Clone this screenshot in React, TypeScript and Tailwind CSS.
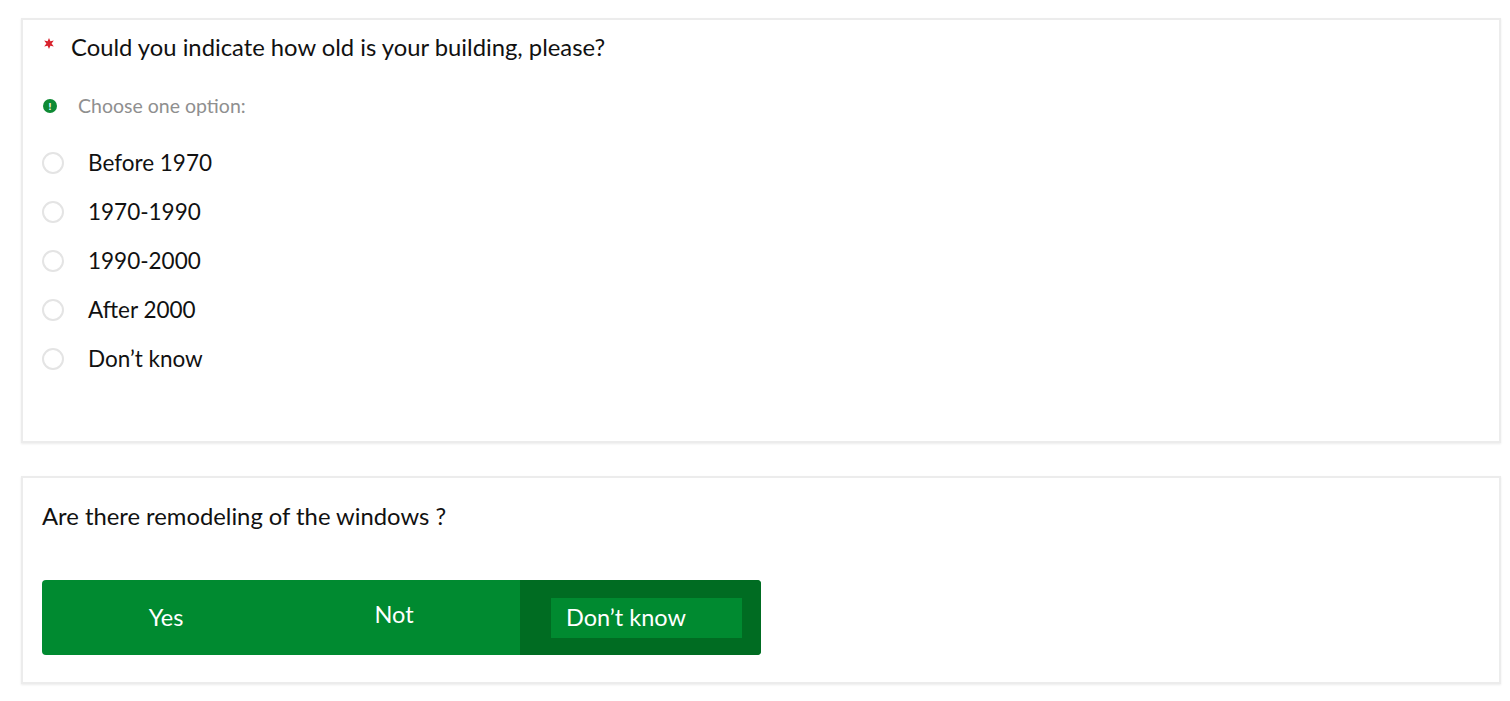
import React from "react";

const options = ["Before 1970", "1970-1990", "1990-2000", "After 2000", "Don’t know"];

export default function App() {
  return (
    <div
      className="w-[1510px] h-[701px] bg-white pt-[18px] pl-[21px] pr-[9px]"
      style={{ fontFamily: "Lato, 'Open Sans', sans-serif" }}
    >
      <div className="h-[425px] border-2 border-[#ececec] shadow-[0_1px_2px_rgba(0,0,0,0.08)] pl-[19px] pt-[12px]">
        <div className="flex items-center h-[32px]">
          <svg width="12" height="12" viewBox="0 0 12 12" className="ml-[1px] -mt-[8px]">
            <polygon
              points="6,0 7.4,3.2 10.8,2.4 8.6,5.4 10.8,8.6 7.4,7.8 6,11 4.6,7.8 1.2,8.6 3.4,5.4 1.2,2.4 4.6,3.2"
              fill="#d9232e"
            />
          </svg>
          <span className="ml-[16px] text-[23.8px] text-[#111]">Could you indicate how old is your building, please?</span>
        </div>
        <div className="flex items-center mt-[32px] h-[20px]">
          <span className="ml-[1px] w-[14px] h-[14px] rounded-full bg-[#0e8a34] text-white text-[10px] leading-none font-black flex items-center justify-center">!</span>
          <span className="ml-[21px] text-[19.5px] text-[#8f8f8f]">Choose one option:</span>
        </div>
        <div className="mt-[32px] flex flex-col gap-[19px]">
          {options.map((o) => (
            <div key={o} className="flex items-center h-[30px]">
              <span className="w-[22px] h-[22px] rounded-full border-2 border-[#e4e4e4] bg-white"></span>
              <span className="ml-[24px] text-[22.5px] text-[#111]">{o}</span>
            </div>
          ))}
        </div>
      </div>
      <div className="mt-[33px] h-[208px] border-2 border-[#ececec] shadow-[0_1px_2px_rgba(0,0,0,0.08)] pl-[19px] pt-[23px]">
        <div className="h-[32px] flex items-center text-[23.8px] text-[#111]">Are there remodeling of the windows ?</div>
        <div className="mt-[47px] flex w-[719px] h-[75px] rounded-[4px] overflow-hidden bg-[#008a30]">
          <div className="w-[248px] flex items-center justify-center text-white text-[23.5px]">Yes</div>
          <div className="w-[208px] flex items-center justify-center text-white text-[23.5px] pb-[6px]">Not</div>
          <div className="w-[22px]"></div>
          <div className="flex-1 bg-[#006c22] flex items-center pl-[31px]">
            <div className="w-[191px] h-[40px] bg-[#008a30] text-white text-[23.5px] flex items-center pl-[15px]">Don’t know</div>
          </div>
        </div>
      </div>
    </div>
  );
}
